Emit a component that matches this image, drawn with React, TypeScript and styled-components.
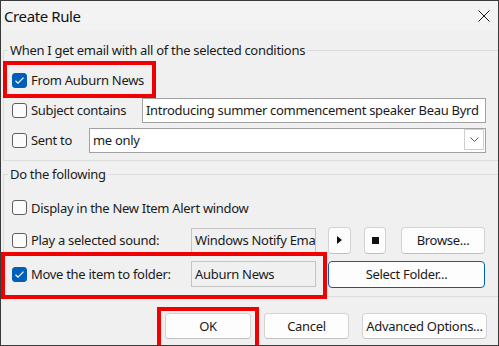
import React from "react";
import styled, { createGlobalStyle } from "styled-components";

const GlobalStyle = createGlobalStyle`
  html, body {
    margin: 0;
    padding: 0;
    background: #ffffff;
  }
  body {
    font-family: "Noto Sans", "Open Sans", sans-serif;
  }
`;

const Window = styled.div`
  width: 499px;
  height: 346px;
  box-sizing: border-box;
  border: 1px solid #3a3a3a;
  background: #f0f0f0;
  color: #1b1b1b;
  font-size: 13px;
  letter-spacing: -0.3px;
  display: flex;
  flex-direction: column;
  overflow: hidden;
`;

const TitleBar = styled.div`
  height: 29px;
  flex-shrink: 0;
  background: #f3f3f3;
  display: flex;
  align-items: center;
  justify-content: space-between;
  padding: 0 8px 0 3px;

  h1 {
    margin: 0;
    font-size: 15px;
    font-weight: 400;
    letter-spacing: -0.4px;
    color: #111;
  }
`;

const Body = styled.div`
  padding: 11px 0 0 2px;
`;

const Group = styled.fieldset<{ $pad: string; $gap?: number }>`
  margin: ${(p) => p.$gap || 0}px 0 0 0;
  padding: ${(p) => p.$pad};
  border: 1px solid #dcdcdc;
  border-right: none;
  min-width: 0;
`;

const Legend = styled.legend`
  padding: 0 2px;
  margin-left: -4px;
  line-height: 18px;
  font-size: 13px;
`;

const Row = styled.div<{ $h: number }>`
  display: flex;
  align-items: center;
  height: ${(p) => p.$h}px;
`;

const CheckLabel = styled.label<{ $w?: number }>`
  display: flex;
  align-items: center;
  gap: 4px;
  flex-shrink: 0;
  width: ${(p) => (p.$w ? `${p.$w}px` : "auto")};
  white-space: nowrap;
`;

const Box = styled.span<{ $on?: boolean }>`
  width: 15px;
  height: 15px;
  box-sizing: border-box;
  border-radius: 3px;
  border: 1px solid ${(p) => (p.$on ? "#005fb8" : "#5f5f5f")};
  background: ${(p) => (p.$on ? "#005fb8" : "#fbfbfb")};
  display: flex;
  align-items: center;
  justify-content: center;
`;

const Field = styled.div<{ $w?: number; $h: number; $muted?: boolean }>`
  box-sizing: border-box;
  height: ${(p) => p.$h}px;
  width: ${(p) => (p.$w ? `${p.$w}px` : "auto")};
  flex: ${(p) => (p.$w ? "0 0 auto" : "1 1 auto")};
  border: 1px solid ${(p) => (p.$muted ? "#c4c4c4" : "#a2a2a2")};
  background: ${(p) => (p.$muted ? "#f0f0f0" : "#ffffff")};
  padding-left: 3px;
  display: flex;
  align-items: center;
  white-space: nowrap;
  overflow: hidden;
`;

const DropButton = styled.span`
  margin-left: auto;
  margin-right: 1px;
  align-self: flex-start;
  width: 20px;
  height: 21px;
  flex-shrink: 0;
  box-sizing: border-box;
  border: 1px solid #cfcfcf;
  background: #fff;
  display: flex;
  align-items: center;
  justify-content: center;
`;

const Button = styled.button<{ $w: number; $h?: number; $ml?: number; $primary?: boolean }>`
  box-sizing: border-box;
  width: ${(p) => p.$w}px;
  height: ${(p) => p.$h || 27}px;
  margin-left: ${(p) => p.$ml || 0}px;
  flex-shrink: 0;
  padding: 0;
  border: 1px solid ${(p) => (p.$primary ? "#005fb8" : "#d3d3d3")};
  border-bottom-color: ${(p) => (p.$primary ? "#005fb8" : "#c2c2c2")};
  border-radius: 4px;
  background: #fdfdfd;
  color: #1b1b1b;
  font-family: "Noto Sans", "Open Sans", sans-serif;
  font-size: 13px;
  letter-spacing: -0.3px;
  display: flex;
  align-items: center;
  justify-content: center;
`;

const Marked = styled.div<{ $t: number; $r: number; $b: number; $l: number }>`
  position: relative;
  display: flex;
  align-items: center;
  align-self: stretch;

  &::after {
    content: "";
    position: absolute;
    top: -${(p) => p.$t}px;
    right: -${(p) => p.$r}px;
    bottom: -${(p) => p.$b}px;
    left: -${(p) => p.$l}px;
    border: 4px solid #f00000;
    pointer-events: none;
  }
`;

const Footer = styled.div`
  display: flex;
  justify-content: flex-end;
  align-items: center;
  padding: 16px 11px 0 0;
  gap: 13px;
`;

const Check = ({ on }: { on?: boolean }) => (
  <Box $on={on}>
    {on && (
      <svg width="11" height="9" viewBox="0 0 11 9">
        <polyline points="1.5,4.8 4,7.2 9.5,1.6" fill="none" stroke="#fff" strokeWidth="1.2" />
      </svg>
    )}
  </Box>
);

function App() {
  return (
    <>
      <GlobalStyle />
      <Window>
        <TitleBar>
          <h1>Create Rule</h1>
          <svg width="12" height="12" viewBox="0 0 12 12">
            <path d="M0.5 0.5 L11.5 11.5 M11.5 0.5 L0.5 11.5" stroke="#1b1b1b" strokeWidth="1" />
          </svg>
        </TitleBar>
        <Body>
          <Group $pad="6px 12px 5px 8px">
            <Legend>When I get email with all of the selected conditions</Legend>
            <Row $h={30}>
              <Marked $t={4} $r={12} $b={3} $l={9}>
                <CheckLabel>
                  <Check on />
                  From Auburn News
                </CheckLabel>
              </Marked>
            </Row>
            <Row $h={30}>
              <CheckLabel $w={130}>
                <Check />
                Subject contains
              </CheckLabel>
              <Field $h={25}>Introducing summer commencement speaker Beau Byrd</Field>
            </Row>
            <Row $h={30}>
              <CheckLabel $w={77}>
                <Check />
                Sent to
              </CheckLabel>
              <Field $h={25}>
                me only
                <DropButton>
                  <svg width="9" height="5" viewBox="0 0 9 5">
                    <polyline points="0.5,0.5 4.5,4.5 8.5,0.5" fill="none" stroke="#5a5a5a" strokeWidth="1" />
                  </svg>
                </DropButton>
              </Field>
            </Row>
          </Group>
          <Group $pad="9px 13px 5px 8px" $gap={4}>
            <Legend>Do the following</Legend>
            <Row $h={31}>
              <CheckLabel>
                <Check />
                Display in the New Item Alert window
              </CheckLabel>
            </Row>
            <Row $h={34}>
              <CheckLabel $w={179}>
                <Check />
                Play a selected sound:
              </CheckLabel>
              <Field $w={125} $h={25} $muted>
                Windows Notify Email
              </Field>
              <Button $w={23} $ml={12}>
                <svg width="5" height="8" viewBox="0 0 5 8">
                  <polygon points="0,0 5,4 0,8" fill="#111" />
                </svg>
              </Button>
              <Button $w={22} $ml={13}>
                <svg width="7" height="7" viewBox="0 0 7 7">
                  <rect width="7" height="7" fill="#111" />
                </svg>
              </Button>
              <Button $w={84} $ml={15}>
                Browse...
              </Button>
            </Row>
            <Row $h={34}>
              <Marked $t={5} $r={11} $b={8} $l={11}>
                <CheckLabel $w={179}>
                  <Check on />
                  Move the item to folder:
                </CheckLabel>
                <Field $w={125} $h={26} $muted>
                  Auburn News
                </Field>
              </Marked>
              <Button $w={157} $ml={12} $primary>
                Select Folder...
              </Button>
            </Row>
          </Group>
          <Footer>
            <Marked $t={6} $r={8} $b={10} $l={8}>
              <Button $w={86} $h={26}>
                OK
              </Button>
            </Marked>
            <Button $w={85} $h={26}>
              Cancel
            </Button>
            <Button $w={125} $h={26}>
              Advanced Options...
            </Button>
          </Footer>
        </Body>
      </Window>
    </>
  );
}

export default App;
